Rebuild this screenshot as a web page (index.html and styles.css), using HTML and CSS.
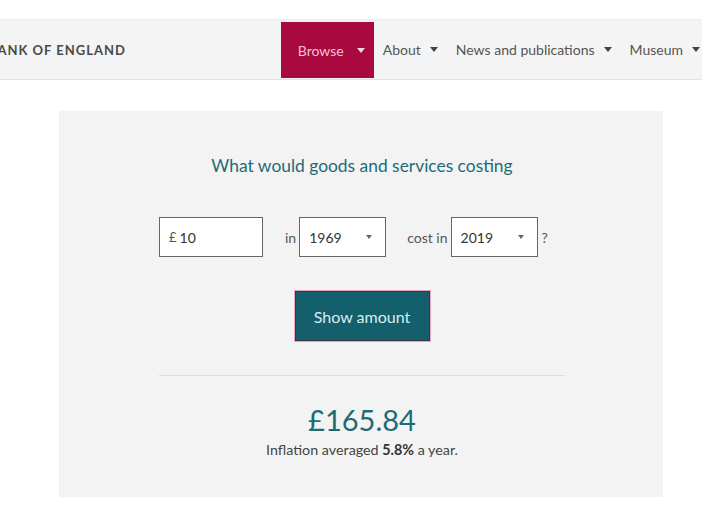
FILE: index.html
```html
<!DOCTYPE html>
<html lang="en">

<head>
  <meta charset="UTF-8">
  <meta name="viewport" content="width=device-width, initial-scale=1.0">
  <link rel="stylesheet" href="styles.css">
</head>

<body>

  <div class="topline"></div>

  <div class="navbar">
    <div class="logo">Bank of England</div>
    <ul class="menu">
      <li class="active">Browse <span class="caret"></span></li>
      <li>About <span class="caret"></span></li>
      <li>News and publications <span class="caret"></span></li>
      <li>Museum <span class="caret"></span></li>
    </ul>
  </div>

  <div class="card">
    <h2>What would goods and services costing</h2>

    <div class="form-row">
      <div class="amount">
        <span class="pound">£</span>
        <span>10</span>
      </div>
      <label class="word first">in</label>
      <div class="select">
        <span>1969</span>
        <span class="arrow"></span>
      </div>
      <label class="word">cost in</label>
      <div class="select">
        <span>2019</span>
        <span class="arrow"></span>
      </div>
      <span class="qmark">?</span>
    </div>

    <div class="btn-row">
      <button>Show amount</button>
    </div>

    <hr>

    <div class="result">£165.84</div>
    <p class="summary">Inflation averaged <b>5.8%</b> a year.</p>
  </div>

</body>

</html>
```

FILE: styles.css
```css
* {
  margin: 0;
  padding: 0;
  box-sizing: border-box;
}

body {
  background: #ffffff;
  font-family: Lato, "Open Sans", sans-serif;
  color: #444;
  overflow: hidden;
}

.topline {
  height: 20px;
  border-bottom: 1px solid #efefef;
}

.navbar {
  display: flex;
  align-items: center;
  justify-content: space-between;
  height: 60px;
  background: #f4f4f4;
  border-bottom: 1px solid #e2e2e2;
}

.logo {
  margin-left: -12px;
  text-transform: uppercase;
  font-size: 13px;
  font-weight: 700;
  letter-spacing: 1px;
  color: #4a4a4a;
}

.menu {
  display: flex;
  list-style: none;
  height: 100%;
  margin-right: -7px;
}

.menu li {
  display: flex;
  align-items: center;
  padding: 0 9px;
  font-size: 14px;
  color: #555;
  white-space: nowrap;
}

.menu li.active {
  background: #a8093f;
  color: #f3c2cf;
  padding: 0 9px 0 17px;
  margin: 2px 0 1px 0;
}

.caret {
  display: inline-block;
  margin-left: 9px;
  border-left: 4px solid transparent;
  border-right: 4px solid transparent;
  border-top: 5px solid #444;
}

.active .caret {
  margin-left: 13px;
  border-top-color: #f3d7df;
}

.card {
  margin: 31px 0 0 59px;
  width: 604px;
  height: 386px;
  background: #f3f3f3;
  padding: 44px 98px 0 100px;
}

.card h2 {
  text-align: center;
  font-size: 17.4px;
  font-weight: 400;
  color: #1e6b78;
}

.form-row {
  display: flex;
  align-items: center;
  margin-top: 41px;
  font-size: 14px;
  color: #555;
}

.amount {
  width: 104px;
  height: 40px;
  background: #fff;
  border: 1px solid #666;
  display: flex;
  align-items: center;
  padding-left: 9px;
  gap: 3px;
  color: #333;
}

.pound {
  font-size: 13px;
  color: #555;
}

.word {
  margin: 0 3px 0 21px;
}

.word.first {
  margin-left: 22px;
}

.select {
  width: 87px;
  height: 40px;
  background: #fff;
  border: 1px solid #666;
  display: flex;
  align-items: center;
  justify-content: space-between;
  padding: 0 13px 0 9px;
  color: #333;
}

.arrow {
  border-left: 3px solid transparent;
  border-right: 3px solid transparent;
  border-top: 4px solid #666;
}

.qmark {
  margin-left: 4px;
}

.btn-row {
  display: flex;
  justify-content: center;
  margin-top: 34px;
}

button {
  width: 135px;
  height: 50px;
  background: #135f6c;
  border: 1px solid #3b3546;
  box-shadow: 0 0 0 1px #e7a6bd;
  color: #d8eef0;
  font-family: Lato, "Open Sans", sans-serif;
  font-size: 16px;
}

hr {
  border: none;
  border-top: 1px solid #dcdcdc;
  margin-top: 34px;
}

.result {
  text-align: center;
  margin-top: 26px;
  font-size: 29px;
  color: #1e6b78;
}

.summary {
  text-align: center;
  font-size: 14.3px;
  color: #444;
  margin-top: 4px;
}

.summary b {
  color: #333;
}
```
